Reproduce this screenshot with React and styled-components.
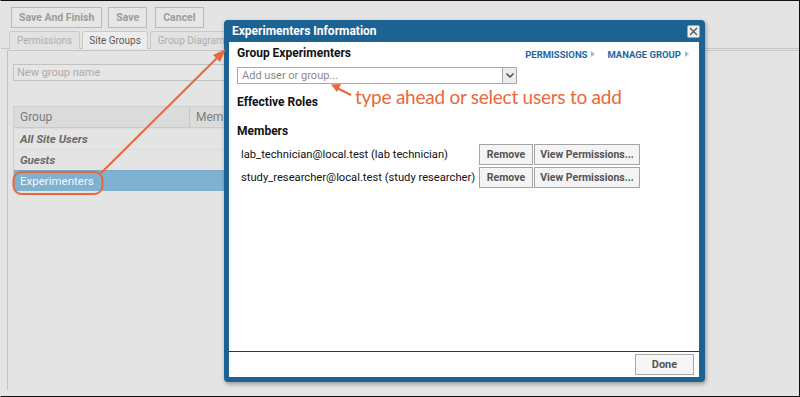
import React from "react";
import styled, { createGlobalStyle } from "styled-components";

const Global = createGlobalStyle`
  html, body { margin: 0; padding: 0; }
  body { background: #e4e4e4; font-family: Roboto, "Liberation Sans", sans-serif; }
  * { box-sizing: border-box; }
`;

const Frame = styled.div`
  position: relative;
  width: 800px;
  height: 397px;
  border: 1px solid #111;
  border-left-color: #e4e4e4;
  background: #e4e4e4;
  overflow: hidden;
`;

const Toolbar = styled.div`
  display: flex;
  padding: 6px 0 0 10px;
  height: 30px;
`;

const GreyButton = styled.div`
  height: 21px;
  padding: 0 7px;
  border: 1px solid #b9b9b9;
  background: #e6e6e6;
  color: #9c9c9c;
  font-weight: 700;
  font-size: 10.5px;
  display: flex;
  align-items: center;
  margin-right: ${(p) => p.$mr || 0}px;
`;

const Tabs = styled.div`
  display: flex;
  gap: 2px;
  padding-left: 8px;
  height: 18px;
  border-bottom: 1px solid #c6c6c6;
`;

const Tab = styled.div`
  height: 18px;
  padding: 0 ${(p) => (p.$active ? 6 : 7)}px;
  border: 1px solid #c9c9c9;
  border-bottom: none;
  border-radius: 3px 3px 0 0;
  background: ${(p) => (p.$active ? "#ececec" : "#e2e2e2")};
  color: ${(p) => (p.$active ? "#5a5a5a" : "#adadad")};
  font-size: 10px;
  display: flex;
  align-items: center;
`;

const Panel = styled.div`
  margin: 1px 0 0 6px;
  border-top: 1px solid #c6c6c6;
  border-left: 1px solid #c2c2c2;
  height: 340px;
  padding: 13px 0 0 5px;
`;

const NameInput = styled.div`
  width: 400px;
  height: 17px;
  border: 1px solid #c2c2c2;
  background: #e6e6e6;
  color: #ababab;
  font-size: 11px;
  padding-left: 3px;
  display: flex;
  align-items: center;
`;

const Grid = styled.div`
  margin-top: 25px;
  width: 400px;
  border: 1px solid #cfcfcf;
  border-bottom: none;
`;

const GridHead = styled.div`
  display: grid;
  grid-template-columns: 176px 1fr;
  height: 21px;
  background: #dbdbdb;
  border-bottom: 1px solid #cbcbcb;
  color: #7c7c7c;
  font-size: 12px;
`;

const HeadCell = styled.div`
  display: flex;
  align-items: center;
  padding-left: 6px;
  border-right: ${(p) => (p.$sep ? "1px solid #c8c8c8" : "none")};
`;

const Row = styled.div`
  height: 21px;
  display: flex;
  align-items: center;
  padding-left: 6px;
  font-size: 11.5px;
  background: ${(p) => (p.$selected ? "#7fb1d0" : "#e4e4e4")};
  color: ${(p) => (p.$selected ? "#f4f8fb" : "#6a6a6a")};
  font-weight: ${(p) => (p.$selected ? 400 : 700)};
  font-style: ${(p) => (p.$selected ? "normal" : "italic")};
  border-top: 1px ${(p) => (p.$selected ? "dotted #8a9aa6" : "solid #dcdcdc")};
`;

/* Dialog */
const Dialog = styled.div`
  position: absolute;
  left: 223px;
  top: 19px;
  width: 481px;
  height: 362px;
  background: #1c6393;
  border-radius: 4px;
  padding: 0 6px 5px 5px;
  display: flex;
  flex-direction: column;
  box-shadow: 1px 2px 4px rgba(0, 0, 0, 0.35);
`;

const DialogHeader = styled.div`
  height: 22px;
  display: flex;
  align-items: center;
  justify-content: space-between;
  color: #fff;
  font-weight: 700;
  font-size: 12px;
  padding-left: 3px;
`;

const CloseBox = styled.div`
  width: 13px;
  height: 13px;
  background: #f0f0f0;
  border: 1px solid #9aa;
  border-radius: 2px;
  display: flex;
  align-items: center;
  justify-content: center;
  margin-right: -1px;
`;

const DialogBody = styled.div`
  flex: 1;
  background: #fff;
  border-bottom: 1px solid #14405e;
  padding: 2px 8px 0 8px;
  display: flex;
  flex-direction: column;
`;

const TitleRow = styled.div`
  display: flex;
  align-items: center;
  justify-content: space-between;
  height: 17px;
`;

const SectionTitle = styled.div`
  font-weight: 700;
  font-size: 12px;
  color: #111;
  margin-top: ${(p) => p.$mt || 0}px;
`;

const Links = styled.div`
  display: flex;
  gap: 12px;
  padding-top: 3px;
  padding-right: 2px;
`;

const LinkItem = styled.div`
  display: flex;
  align-items: center;
  gap: 4px;
  color: #1e67a0;
  font-size: 9.5px;
  font-weight: 700;
`;

const Tri = styled.span`
  width: 0;
  height: 0;
  border-top: 3.5px solid transparent;
  border-bottom: 3.5px solid transparent;
  border-left: 4px solid #b5b5b5;
`;

const Combo = styled.div`
  margin-top: 6px;
  width: 280px;
  height: 17px;
  border: 1px solid #a9a9a9;
  display: flex;
`;

const ComboText = styled.div`
  flex: 1;
  color: #8a8a8a;
  font-size: 11px;
  padding-left: 4px;
  display: flex;
  align-items: center;
`;

const ComboTrigger = styled.div`
  width: 14px;
  border-left: 1px solid #a9a9a9;
  background: #ececec;
  display: flex;
  align-items: center;
  justify-content: center;
`;

const MemberList = styled.div`
  margin-top: 6px;
  display: flex;
  flex-direction: column;
  gap: 2px;
`;

const MemberRow = styled.div`
  display: flex;
  align-items: center;
  padding-left: 4px;
`;

const MemberName = styled.div`
  font-size: 11.2px;
  color: #111;
  flex: 0 0 238px;
  white-space: nowrap;
`;

const Btn = styled.div`
  flex: 0 0 auto;
  height: 21px;
  border: 1px solid #a4a4a4;
  background: #f4f4f4;
  color: #555;
  font-weight: 700;
  font-size: 10.5px;
  white-space: nowrap;
  display: flex;
  align-items: center;
  justify-content: center;
  width: ${(p) => p.$w}px;
  margin-right: 1px;
`;

const Footer = styled.div`
  height: 25px;
  background: #fff;
  display: flex;
  align-items: center;
  justify-content: flex-end;
  padding-right: 4px;
`;

const DoneBtn = styled(Btn)`
  border-color: #a9a9a9;
  background: #f6f6f6;
  font-size: 11px;
`;

/* Annotations */
const Overlay = styled.svg`
  position: absolute;
  left: 0;
  top: 0;
  pointer-events: none;
`;

const Callout = styled.div`
  position: absolute;
  left: 354px;
  top: 84px;
  color: #e8683c;
  font-family: Lato, "Open Sans", sans-serif;
  font-size: 19px;
  letter-spacing: -0.25px;
  white-space: nowrap;
`;

export default function App() {
  const orange = "#e8683c";
  return (
    <Frame>
      <Global />
      <Toolbar>
        <GreyButton $mr={6}>Save And Finish</GreyButton>
        <GreyButton $mr={8}>Save</GreyButton>
        <GreyButton>Cancel</GreyButton>
      </Toolbar>
      <Tabs>
        <Tab>Permissions</Tab>
        <Tab $active>Site Groups</Tab>
        <Tab>Group Diagram</Tab>
      </Tabs>
      <Panel>
        <NameInput>New group name</NameInput>
        <Grid>
          <GridHead>
            <HeadCell $sep>Group</HeadCell>
            <HeadCell>Members</HeadCell>
          </GridHead>
          <Row>All Site Users</Row>
          <Row>Guests</Row>
          <Row $selected>Experimenters</Row>
        </Grid>
      </Panel>

      <Dialog>
        <DialogHeader>
          <span>Experimenters Information</span>
          <CloseBox>
            <svg width="9" height="9" viewBox="0 0 9 9">
              <path d="M1 1 L8 8 M8 1 L1 8" stroke="#555" strokeWidth="1.3" />
            </svg>
          </CloseBox>
        </DialogHeader>
        <DialogBody>
          <TitleRow>
            <SectionTitle>Group Experimenters</SectionTitle>
            <Links>
              <LinkItem>
                PERMISSIONS <Tri />
              </LinkItem>
              <LinkItem>
                MANAGE GROUP <Tri />
              </LinkItem>
            </Links>
          </TitleRow>
          <Combo>
            <ComboText>Add user or group...</ComboText>
            <ComboTrigger>
              <svg width="8" height="5" viewBox="0 0 8 5">
                <path d="M0.5 0.5 L4 4 L7.5 0.5" stroke="#444" strokeWidth="1.4" fill="none" />
              </svg>
            </ComboTrigger>
          </Combo>
          <SectionTitle $mt={11}>Effective Roles</SectionTitle>
          <SectionTitle $mt={15}>Members</SectionTitle>
          <MemberList>
            <MemberRow>
              <MemberName>lab_technician@local.test (lab technician)</MemberName>
              <Btn $w={54}>Remove</Btn>
              <Btn $w={106}>View Permissions...</Btn>
            </MemberRow>
            <MemberRow>
              <MemberName>study_researcher@local.test (study researcher)</MemberName>
              <Btn $w={54}>Remove</Btn>
              <Btn $w={106}>View Permissions...</Btn>
            </MemberRow>
          </MemberList>
        </DialogBody>
        <Footer>
          <DoneBtn $w={59}>Done</DoneBtn>
        </Footer>
      </Dialog>

      <Overlay width="800" height="397" viewBox="0 0 800 397">
        <rect x="12.5" y="171" width="89" height="22" rx="8" fill="none" stroke={orange} strokeWidth="2" />
        <line x1="100" y1="172" x2="219" y2="54" stroke={orange} strokeWidth="2" />
        <path d="M225 48 L212 54 L219 61 Z" fill={orange} />
        <line x1="350" y1="94" x2="336" y2="87" stroke={orange} strokeWidth="2" />
        <path d="M330 83.5 L340 83 L336 91 Z" fill={orange} />
      </Overlay>
      <Callout>type ahead or select users to add</Callout>
    </Frame>
  );
}
